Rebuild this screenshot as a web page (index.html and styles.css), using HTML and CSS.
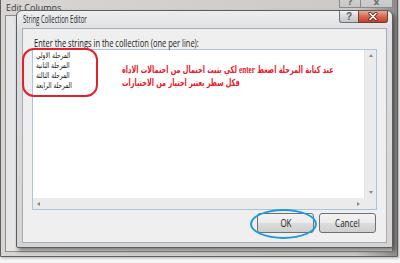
FILE: index.html
```html
<!DOCTYPE html>
<html lang="ar">
<head>
    <meta charset="UTF-8">
    <title>String Collection Editor</title>
    <link rel="stylesheet" href="styles.css">
</head>
<body>
    <div class="desktop">
        <!-- النافذة الخلفية -->
        <div class="bg-window">
            <div class="bg-caption">
                <span class="bg-title">Edit Columns</span>
                <div class="bg-buttons">
                    <span class="bg-btn">?</span>
                    <span class="bg-btn bg-close">x</span>
                </div>
            </div>
            <div class="bg-client"></div>
        </div>

        <div class="dialog">
            <div class="titlebar">
                <span class="title squeeze">String Collection Editor</span>
                <div class="caption-buttons">
                    <span class="help-btn">?</span>
                    <span class="close-btn">
                        <svg width="12" height="9" viewBox="0 0 12 9">
                            <path d="M3 1.5 L9 7.5 M9 1.5 L3 7.5" stroke="#5a2a22" stroke-width="3.2" stroke-linecap="round"/>
                            <path d="M3 1.5 L9 7.5 M9 1.5 L3 7.5" stroke="#ffffff" stroke-width="1.6" stroke-linecap="round"/>
                        </svg>
                    </span>
                </div>
            </div>
            <div class="client">
                <div class="prompt"><span class="squeeze">Enter the strings in the collection (one per line):</span></div>
                <div class="editor">
                    <div class="editor-main">
                        <div class="lines">
                            <div class="line"><span class="squeeze" dir="rtl">المرحلة الاولي</span></div>
                            <div class="line"><span class="squeeze" dir="rtl">المرحلة الثانية</span></div>
                            <div class="line"><span class="squeeze" dir="rtl">المرحلة الثالثة</span></div>
                            <div class="line"><span class="squeeze" dir="rtl">المرحلة الرابعة</span></div>
                        </div>
                        <div class="vscroll">
                            <span class="arrow up"></span>
                            <span class="arrow down"></span>
                        </div>
                    </div>
                    <div class="hscroll-row">
                        <div class="hscroll">
                            <span class="arrow left"></span>
                            <span class="arrow right"></span>
                        </div>
                        <div class="corner"></div>
                    </div>
                </div>
                <div class="actions">
                    <span class="btn"><span class="squeeze">OK</span></span>
                    <span class="btn"><span class="squeeze">Cancel</span></span>
                </div>
            </div>
        </div>

        <!-- الملاحظات الحمراء -->
        <div class="note">
            <div class="note-line"><span class="squeeze" dir="rtl">عند كتابة المرحلة اضغط <span class="en">enter</span> لكي يثبت احتمال من احتمالات الاداة</span></div>
            <div class="note-line"><span class="squeeze" dir="rtl">فكل سطر يعتبر اختيار من الاختيارات</span></div>
        </div>
        <div class="mark-list"></div>
        <div class="mark-ok"></div>
    </div>
</body>
</html>
```

FILE: styles.css
```css
body {
    margin: 0;
    background: #ffffff;
    font-family: 'DejaVu Sans', 'Liberation Sans', sans-serif;
}

.desktop {
    position: relative;
    width: 400px;
    height: 263px;
    overflow: hidden;
    background: #f6f6f6;
}

/* اللقطة الأصلية مضغوطة أفقياً */
.squeeze {
    display: inline-block;
    transform-origin: left center;
}

/* النافذة الخلفية */
.bg-window {
    position: absolute;
    left: 0;
    top: -12px;
    width: 398px;
    height: 269px;
    box-sizing: border-box;
    border: 1px solid #5e5e5e;
    border-radius: 6px 6px 0 0;
    background: linear-gradient(90deg, #d8d5d3, #cdc9c6 90%, #8d8a88);
    box-shadow: 1px 1px 3px rgba(0, 0, 0, 0.3);
    display: flex;
    flex-direction: column;
}

.bg-caption {
    height: 26px;
    display: flex;
    align-items: flex-start;
    justify-content: space-between;
    padding: 0 4px 0 5px;
}

.bg-title {
    font-family: 'Open Sans', 'Liberation Sans', sans-serif;
    font-size: 9px;
    line-height: 10px;
    margin-top: 14px;
    color: #3a3a3a;
}

.bg-buttons {
    display: flex;
}

.bg-btn {
    width: 22px;
    height: 19px;
    box-sizing: border-box;
    border: 1px solid #8a8a8a;
    border-top: none;
    background: linear-gradient(#dcdcdc, #c6c6c6);
    color: #6a6a6a;
    font-size: 9px;
    font-weight: bold;
    display: flex;
    align-items: flex-end;
    justify-content: center;
}

.bg-close {
    width: 32px;
    border-left: none;
}

.bg-client {
    flex: 1;
    margin: 0 4px 4px 4px;
    border: 1px solid #8e8e8e;
    background: #e6e6e6;
}

/* النافذة الأمامية */
.dialog {
    position: absolute;
    left: 16px;
    top: 10px;
    width: 377px;
    height: 238px;
    box-sizing: border-box;
    border: 1px solid #5a5d63;
    border-radius: 6px 6px 2px 2px;
    background: linear-gradient(#eceef0, #dcdee1 20px, #d6d4d2);
    box-shadow: 2px 3px 4px rgba(0, 0, 0, 0.45);
    display: flex;
    flex-direction: column;
    padding: 0 5px 4px 5px;
}

.titlebar {
    height: 17px;
    display: flex;
    justify-content: space-between;
    align-items: flex-start;
}

.title {
    font-family: 'Open Sans', 'Liberation Sans', sans-serif;
    font-size: 10px;
    line-height: 12px;
    color: #1e1e1e;
    margin: 2px 0 0 1px;
    transform: scaleX(0.6);
}

.caption-buttons {
    display: flex;
    margin-right: -1px;
}

.help-btn,
.close-btn {
    height: 12px;
    box-sizing: border-box;
    border: 1px solid #6e7178;
    border-top: none;
    display: flex;
    align-items: center;
    justify-content: center;
}

.help-btn {
    width: 19px;
    border-right: none;
    border-radius: 0 0 0 3px;
    background: linear-gradient(#f4f4f4, #d4d6d9 50%, #c3c6ca);
    color: #5a5a5a;
    font-family: 'Liberation Sans', sans-serif;
    font-size: 10px;
    font-weight: bold;
}

.close-btn {
    width: 30px;
    border-color: #7a3a30;
    border-radius: 0 0 3px 0;
    background: linear-gradient(#eaa896, #d86a52 50%, #c4402a);
}

.client {
    flex: 1;
    background: #efefef;
    border: 1px solid #a8abb0;
    padding: 0 9px;
    display: flex;
    flex-direction: column;
}

.prompt {
    font-family: 'Open Sans', 'Liberation Sans', sans-serif;
    font-size: 10px;
    line-height: 12px;
    height: 12px;
    color: #1a1a1a;
    margin: 8px 0 0 2px;
    white-space: nowrap;
}

.prompt .squeeze {
    transform: scaleX(0.75);
}

.editor {
    height: 161px;
    box-sizing: border-box;
    border: 1px solid #a9c4de;
    background: #fff;
    display: flex;
    flex-direction: column;
}

.editor-main {
    flex: 1;
    display: flex;
}

.lines {
    flex: 1;
    padding: 1px 0 0 3px;
}

.line {
    font-size: 8px;
    line-height: 10px;
    color: #111;
    white-space: nowrap;
}

.line .squeeze {
    transform: scaleX(0.72);
}

.vscroll {
    width: 11px;
    background: #ebebeb;
    border-left: 1px solid #e2e2e2;
    display: flex;
    flex-direction: column;
    justify-content: space-between;
    align-items: center;
    padding: 4px 0;
}

.hscroll-row {
    height: 11px;
    display: flex;
}

.hscroll {
    flex: 1;
    background: #ebebeb;
    display: flex;
    justify-content: space-between;
    align-items: center;
    padding: 0 4px;
}

.corner {
    width: 12px;
    background: #ebebeb;
}

.arrow {
    width: 0;
    height: 0;
    border: 2px solid transparent;
}

.arrow.up {
    border-bottom: 3px solid #888;
    border-top: none;
}

.arrow.down {
    border-top: 3px solid #888;
    border-bottom: none;
}

.arrow.left {
    border-right: 3px solid #888;
    border-left: none;
}

.arrow.right {
    border-left: 3px solid #888;
    border-right: none;
}

.actions {
    display: flex;
    justify-content: flex-end;
    gap: 5px;
    margin-top: 3px;
    padding-right: 1px;
}

.btn {
    width: 57px;
    height: 20px;
    box-sizing: border-box;
    border: 1px solid #707070;
    border-radius: 3px;
    background: linear-gradient(#f3f3f3, #ebebeb 50%, #dddddd 51%, #cfcfcf);
    font-family: 'Open Sans', 'Liberation Sans', sans-serif;
    font-size: 10px;
    color: #1a1a1a;
    display: flex;
    align-items: center;
    justify-content: center;
}

.btn .squeeze {
    transform: scaleX(0.8);
    transform-origin: center;
}

/* العلامات الحمراء والزرقاء */
.note {
    position: absolute;
    left: 122px;
    top: 63px;
    width: max-content;
    color: #e8202a;
    font-weight: bold;
    font-size: 10px;
    line-height: 13px;
}

.note-line {
    white-space: nowrap;
}

.note-line .squeeze {
    transform: scaleX(0.65);
}

.note .en {
    font-family: 'Liberation Serif', serif;
    font-size: 11px;
}

.mark-list {
    position: absolute;
    left: 22px;
    top: 48px;
    width: 76px;
    height: 49px;
    box-sizing: border-box;
    border: 2px solid #e3212b;
    border-radius: 12px;
}

.mark-ok {
    position: absolute;
    left: 250px;
    top: 209px;
    width: 67px;
    height: 30px;
    box-sizing: border-box;
    border: 2px solid #1c9bd8;
    border-radius: 50%;
}
```
